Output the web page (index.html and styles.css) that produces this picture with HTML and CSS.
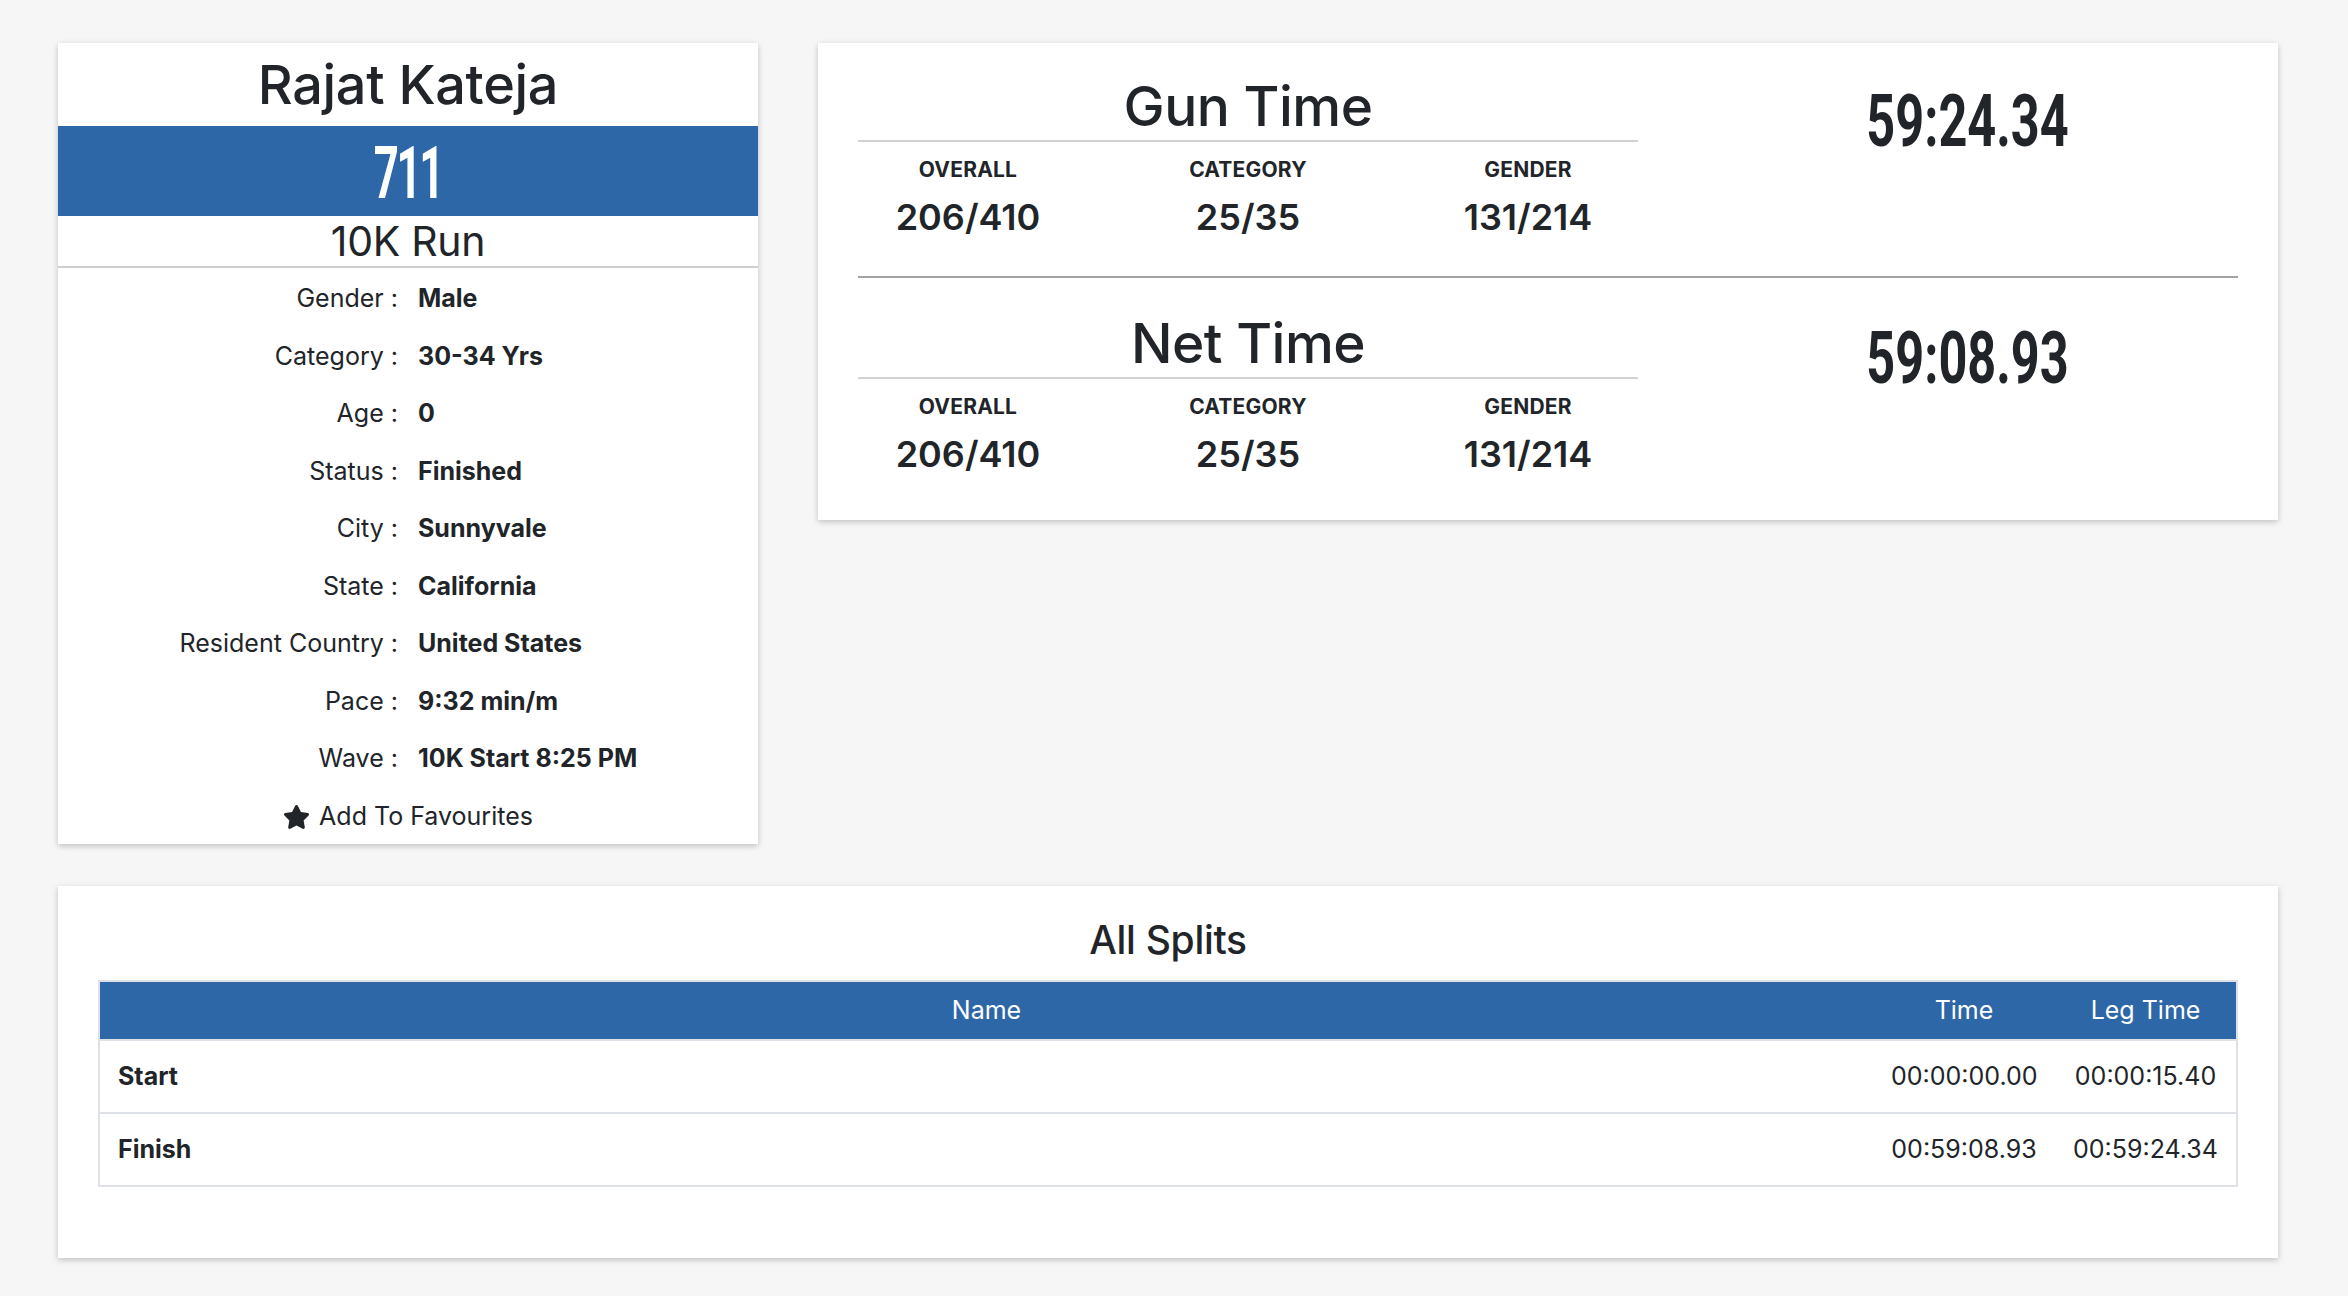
FILE: index.html
```html
<!DOCTYPE html>
<html lang="en">
<head>
<meta charset="utf-8">
<title>Rajat Kateja - Results</title>
<link rel="stylesheet" href="styles.css">
</head>
<body>
<div class="page">
  <div class="top-row">
    <section class="card athlete">
      <h1 class="athlete-name">Rajat Kateja</h1>
      <div class="bib"><span class="bib-num">711</span></div>
      <div class="race">10K Run</div>
      <dl class="details">
        <dt>Gender :</dt><dd>Male</dd>
        <dt>Category :</dt><dd>30-34 Yrs</dd>
        <dt>Age :</dt><dd>0</dd>
        <dt>Status :</dt><dd>Finished</dd>
        <dt>City :</dt><dd>Sunnyvale</dd>
        <dt>State :</dt><dd>California</dd>
        <dt>Resident Country :</dt><dd>United States</dd>
        <dt>Pace :</dt><dd>9:32 min/m</dd>
        <dt>Wave :</dt><dd>10K Start 8:25 PM</dd>
      </dl>
      <div class="fav">
        <svg class="star" viewBox="0 0 576 512" aria-hidden="true"><path d="M259.3 17.8L194 150.2 47.9 171.5c-26.2 3.8-36.7 36.1-17.7 54.6l105.7 103-25 145.5c-4.5 26.3 23.2 46 46.4 33.7L288 439.6l130.7 68.7c23.2 12.2 50.9-7.4 46.4-33.7l-25-145.5 105.7-103c19-18.5 8.5-50.8-17.7-54.6L382 150.2 316.7 17.800c-11.7-23.6-45.6-23.9-57.4 0z"/></svg>
        <span>Add To Favourites</span>
      </div>
    </section>

    <section class="card results">
      <div class="result result-first">
        <div class="result-main">
          <h2 class="result-title">Gun Time</h2>
          <div class="stats">
            <div class="stat"><div class="stat-label">Overall</div><div class="stat-value">206/410</div></div>
            <div class="stat"><div class="stat-label">Category</div><div class="stat-value">25/35</div></div>
            <div class="stat"><div class="stat-label">Gender</div><div class="stat-value">131/214</div></div>
          </div>
        </div>
        <div class="result-time"><span class="big-time">59:24.34</span></div>
      </div>
      <div class="divider"></div>
      <div class="result result-second">
        <div class="result-main">
          <h2 class="result-title">Net Time</h2>
          <div class="stats">
            <div class="stat"><div class="stat-label">Overall</div><div class="stat-value">206/410</div></div>
            <div class="stat"><div class="stat-label">Category</div><div class="stat-value">25/35</div></div>
            <div class="stat"><div class="stat-label">Gender</div><div class="stat-value">131/214</div></div>
          </div>
        </div>
        <div class="result-time"><span class="big-time">59:08.93</span></div>
      </div>
    </section>
  </div>

  <section class="card splits">
    <h3 class="splits-title">All Splits</h3>
    <table class="splits-table">
      <colgroup>
        <col>
        <col class="col-time">
        <col class="col-time">
      </colgroup>
      <thead>
        <tr><th>Name</th><th>Time</th><th>Leg Time</th></tr>
      </thead>
      <tbody>
        <tr><td class="split-name">Start</td><td>00:00:00.00</td><td>00:00:15.40</td></tr>
        <tr><td class="split-name">Finish</td><td>00:59:08.93</td><td>00:59:24.34</td></tr>
      </tbody>
    </table>
  </section>
</div>
</body>
</html>
```

FILE: styles.css
```css
* { box-sizing: border-box; }

html, body {
  margin: 0;
  padding: 0;
  background: #f6f6f6;
}

body {
  font-family: "Inter", "Roboto", "Liberation Sans", sans-serif;
  color: #212529;
}

.page {
  width: 2348px;
  padding: 43px 70px 40px 58px;
}

.top-row {
  display: flex;
  align-items: flex-start;
  gap: 60px;
}

.card {
  background: #ffffff;
  box-shadow: 0 2px 6px rgba(0, 0, 0, 0.22);
}

/* ---------- athlete card ---------- */
.athlete {
  width: 700px;
  flex: 0 0 700px;
}

.athlete-name {
  margin: 0;
  height: 83px;
  font-size: 54px;
  line-height: 83px;
  font-weight: 500;
  text-align: center;
  letter-spacing: -0.3px;
}

.bib {
  height: 90px;
  padding-top: 5px;
  background: #2e67a7;
  color: #ffffff;
  text-align: center;
  line-height: 85px;
}

.bib-num {
  display: inline-block;
  font-family: "Roboto", "Liberation Sans", sans-serif;
  font-size: 73px;
  font-weight: 700;
  letter-spacing: -4px;
  transform: scaleX(0.6);
}

.race {
  height: 52px;
  font-size: 41px;
  line-height: 50px;
  font-weight: 400;
  text-align: center;
  border-bottom: 2px solid #cfcfcf;
  letter-spacing: -0.3px;
}

.details {
  margin: 0;
  padding-top: 2px;
  display: grid;
  grid-template-columns: 1fr 1fr;
  grid-auto-rows: 57.5px;
  column-gap: 20px;
  font-size: 25px;
  line-height: 57.5px;
}

.details dt {
  text-align: right;
  font-weight: 400;
}

.details dd {
  margin: 0;
  font-weight: 700;
}

.fav {
  height: 56px;
  display: flex;
  align-items: center;
  justify-content: center;
  gap: 9px;
  font-size: 25px;
}

.star {
  width: 27px;
  height: 24px;
  fill: #212529;
  margin-top: 2px;
}

/* ---------- results card ---------- */
.results {
  flex: 1 1 auto;
  padding: 30px 40px 44px;
}

.result {
  display: grid;
  grid-template-columns: 780px 540px;
  column-gap: 60px;
}

.result-second {
  margin-top: 32px;
}

.result-title {
  margin: 0;
  font-size: 55px;
  line-height: 66px;
  font-weight: 500;
  text-align: center;
  padding-bottom: 1px;
  border-bottom: 2px solid #d2d2d2;
  letter-spacing: -0.5px;
}

.stats {
  margin: 0 -30px;
  padding-top: 13px;
  display: grid;
  grid-template-columns: repeat(3, 1fr);
  text-align: center;
}

.stat-label {
  font-size: 21px;
  line-height: 30px;
  font-weight: 700;
  text-transform: uppercase;
  letter-spacing: 0.2px;
}

.stat-value {
  margin-top: 10px;
  font-size: 36px;
  line-height: 44px;
  font-weight: 600;
}

.result-time {
  margin-top: 6px;
  text-align: center;
  line-height: 86px;
}

.big-time {
  display: inline-block;
  font-family: "Roboto", "Liberation Sans", sans-serif;
  font-size: 72px;
  font-weight: 700;
  transform: scaleX(0.7);
}

.divider {
  margin-top: 37px;
  height: 2px;
  background: #a2a2a2;
}

/* ---------- splits card ---------- */
.splits {
  margin-top: 42px;
  padding: 30px 40px 40px;
}

.splits-title {
  margin: 0 0 17px;
  font-size: 39px;
  line-height: 47px;
  font-weight: 500;
  text-align: center;
  letter-spacing: -0.3px;
}

.splits-table {
  width: 100%;
  margin-bottom: 31px;
  border-collapse: collapse;
  table-layout: fixed;
  border: 2px solid #dee2e6;
  font-size: 25px;
  line-height: 30px;
}

.col-time {
  width: 182px;
}

.splits-table th {
  background: #2e67a7;
  color: #ffffff;
  font-weight: 400;
  text-align: center;
  padding: 13.5px 18px;
  border-bottom: 2px solid #dee2e6;
}

.splits-table td {
  padding: 20.5px 18px;
  text-align: center;
  border-bottom: 2px solid #dee2e6;
  white-space: nowrap;
}

.splits-table td.split-name {
  text-align: left;
  font-weight: 700;
}
```
